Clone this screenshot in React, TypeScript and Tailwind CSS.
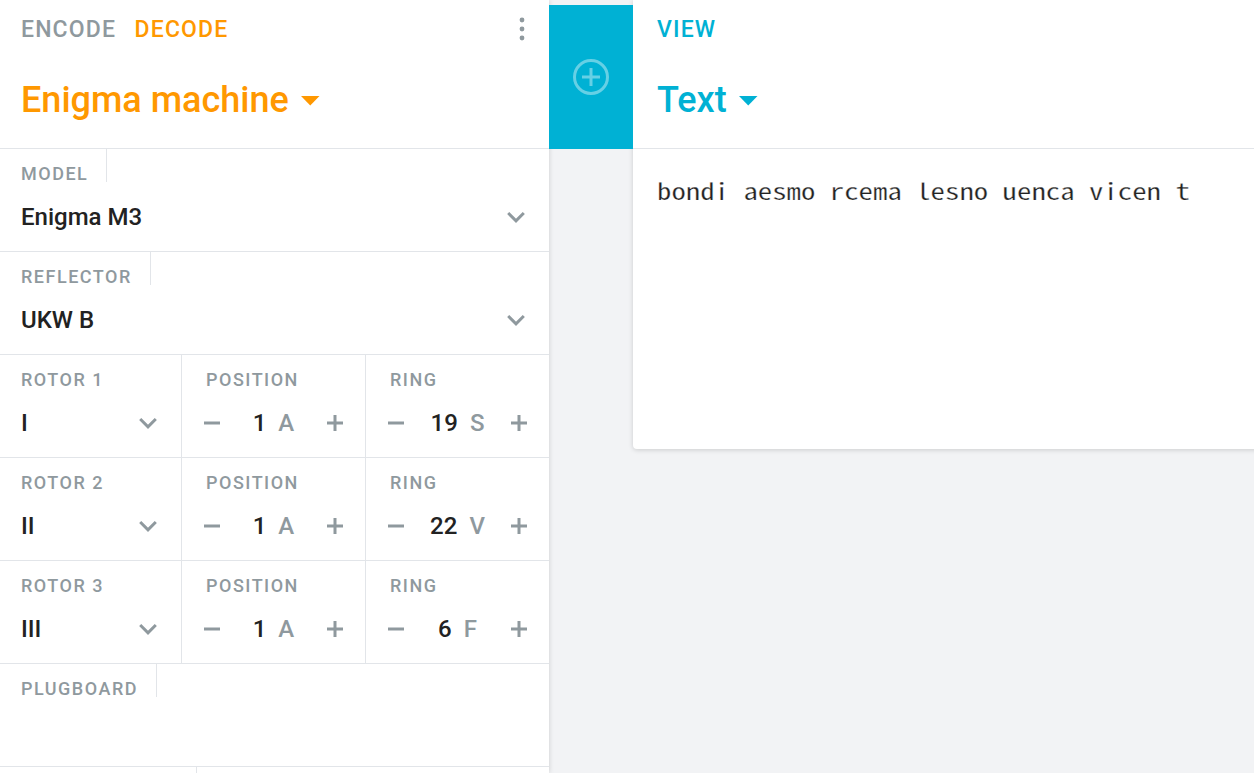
import type { ReactNode } from "react";

function Label({ children, tick = false }: { children: ReactNode; tick?: boolean }) {
  return (
    <div
      className={
        "h-[33px] self-start whitespace-nowrap pt-[13px] pr-[18.1px] text-[18px] leading-6 font-medium tracking-[1.5px] text-[#8f999e] " +
        (tick ? "border-r border-[#e2e5e9]" : "")
      }
    >
      {children}
    </div>
  );
}

function Chevron() {
  return (
    <svg width="18" height="12" viewBox="0 0 18 12" fill="none" stroke="#8f999e" strokeWidth="3">
      <path d="M1.2 2 9 9.8 16.8 2" />
    </svg>
  );
}

function Caret() {
  return (
    <svg className="mt-[2px]" width="19" height="10" viewBox="0 0 19 10" fill="currentColor">
      <path d="M0 0h18.5L9.25 9.5z" />
    </svg>
  );
}

function SelectField({ label, value, tick }: { label: string; value: string; tick?: boolean }) {
  return (
    <div className="flex h-full flex-1 flex-col pl-[21px]">
      <Label tick={tick}>{label}</Label>
      <div className="mt-[19px] flex h-8 items-center justify-between pr-6 text-[24px] leading-8 font-medium text-[#222222]">
        <span>{value}</span>
        <Chevron />
      </div>
    </div>
  );
}

function Stepper({ label, value, letter }: { label: string; value: number; letter: string }) {
  return (
    <div className="flex h-full flex-col">
      <div className="flex pl-6">
        <Label>{label}</Label>
      </div>
      <div className="mt-[19px] flex h-8 items-center justify-between pr-[22px] pl-[22px] text-[24px] leading-8 font-medium">
        <svg width="16" height="16" viewBox="0 0 16 16" stroke="#8f999e" strokeWidth="3">
          <path d="M0 8h16" />
        </svg>
        <span className="flex justify-center gap-3">
          <span className="text-[#222222]">{value}</span>
          <span className="text-[#8f999e]">{letter}</span>
        </span>
        <svg width="16" height="16" viewBox="0 0 16 16" stroke="#8f999e" strokeWidth="3">
          <path d="M0 8h16M8 0v16" />
        </svg>
      </div>
    </div>
  );
}

const rotors = [
  { name: "ROTOR 1", value: "I", position: 1, positionLetter: "A", ring: 19, ringLetter: "S" },
  { name: "ROTOR 2", value: "II", position: 1, positionLetter: "A", ring: 22, ringLetter: "V" },
  { name: "ROTOR 3", value: "III", position: 1, positionLetter: "A", ring: 6, ringLetter: "F" },
];

export default function App() {
  return (
    <div className="flex h-[773px] w-[1254px] overflow-hidden bg-[#f2f3f5] font-[Roboto,sans-serif]">
      <section className="flex w-[549px] shrink-0 flex-col bg-white shadow-[0_0_5px_rgba(0,0,0,0.16)]">
        <header className="h-[149px] shrink-0 border-b border-[#e2e5e9] pl-[21px]">
          <div className="flex h-[58px] items-center justify-between pr-6">
            <div className="flex gap-[18.5px] pt-[2px] text-[23px] leading-8 font-medium tracking-[1.15px]">
              <span className="text-[#8f999e]">ENCODE</span>
              <span className="text-[#ff9800]">DECODE</span>
            </div>
            <svg width="6" height="24" viewBox="0 0 6 24" fill="#8f999e">
              <circle cx="3" cy="3" r="2.4" />
              <circle cx="3" cy="12" r="2.4" />
              <circle cx="3" cy="21" r="2.4" />
            </svg>
          </div>
          <div className="mt-[18px] flex h-12 items-center gap-3 text-[36px] leading-[48px] font-medium text-[#ff9800]">
            <span>Enigma machine</span>
            <Caret />
          </div>
        </header>
        <div className="h-[103px] shrink-0 border-b border-[#e2e5e9]">
          <SelectField label="MODEL" value="Enigma M3" tick />
        </div>
        <div className="h-[103px] shrink-0 border-b border-[#e2e5e9]">
          <SelectField label="REFLECTOR" value="UKW B" tick />
        </div>
        {rotors.map((r) => (
          <div key={r.name} className="grid h-[103px] shrink-0 grid-cols-[182px_184px_183px] border-b border-[#e2e5e9]">
            <div className="border-r border-[#e2e5e9]">
              <SelectField label={r.name} value={r.value} />
            </div>
            <div className="border-r border-[#e2e5e9]">
              <Stepper label="POSITION" value={r.position} letter={r.positionLetter} />
            </div>
            <Stepper label="RING" value={r.ring} letter={r.ringLetter} />
          </div>
        ))}
        <div className="flex h-[103px] shrink-0 border-b border-[#e2e5e9] pl-[21px]">
          <Label tick>PLUGBOARD</Label>
        </div>
        <div className="h-[6px] w-[197px] shrink-0 border-r border-[#e2e5e9]" />
      </section>

      <div className="relative mt-[5px] flex h-36 w-[84px] shrink-0 items-center justify-center bg-[#00b1d4]">
        <svg width="36" height="36" viewBox="0 0 36 36" fill="none" stroke="#66d0e5" strokeWidth="3">
          <circle cx="18" cy="18" r="16.5" />
          <path d="M9 18h18M18 9v18" />
        </svg>
      </div>

      <section className="h-[449px] w-[640px] shrink-0 rounded-b bg-white shadow-[0_1px_5px_rgba(0,0,0,0.16)]">
        <header className="h-[149px] border-b border-[#e2e5e9] pl-6 text-[#00b1d4]">
          <div className="flex h-[58px] items-center pt-[2px] text-[23px] leading-8 font-medium tracking-[1.15px]">VIEW</div>
          <div className="mt-[18px] flex h-12 items-center gap-3 text-[36px] leading-[48px] font-medium">
            <span>Text</span>
            <Caret />
          </div>
        </header>
        <p className="ml-6 w-fit origin-left scale-x-[1.28] pt-[23px] font-['Noto_Sans_Mono_CJK_JP','Noto_Sans_Mono_CJK_SC',monospace] text-[22.5px] leading-9 whitespace-pre text-[#222222] [-webkit-text-stroke:0.25px_white]">
          bondi aesmo rcema lesno uenca vicen t
        </p>
      </section>
    </div>
  );
}
